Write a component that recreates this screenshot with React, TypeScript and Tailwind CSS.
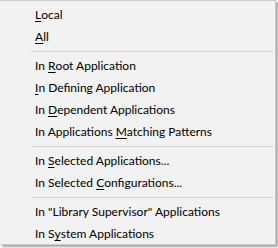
import React from "react";

type Item = { pre: string; key?: string; post: string } | "sep";

const items: Item[] = [
  { pre: "", key: "L", post: "ocal" },
  { pre: "", key: "A", post: "ll" },
  "sep",
  { pre: "In ", key: "R", post: "oot Application" },
  { pre: "", key: "I", post: "n Defining Application" },
  { pre: "In ", key: "D", post: "ependent Applications" },
  { pre: "In Applications ", key: "M", post: "atching Patterns" },
  "sep",
  { pre: "In ", key: "S", post: "elected Applications..." },
  { pre: "In Selected ", key: "C", post: "onfigurations..." },
  "sep",
  { pre: "In \"Library Supervisor\" Applications", post: "" },
  { pre: "In S", key: "y", post: "stem Applications" },
];

export default function App() {
  return (
    <div className="w-[278px] h-[248px] bg-white overflow-hidden">
      <div
        className="w-[276px] h-[245px] bg-[#f2f2f2] border-t border-r border-b border-[#cccccc] shadow-[2px_2px_2px_rgba(0,0,0,0.35)] pt-[3px] text-[12px] text-black"
        style={{ fontFamily: 'Lato, "Liberation Sans", sans-serif' }}
      >
        {items.map((it, i) =>
          it === "sep" ? (
            <div key={i} className="h-[7px] flex items-center pl-[31px] pr-[2px]">
              <div className="h-px w-full bg-[#d7d7d7]" />
            </div>
          ) : (
            <div key={i} className="h-[22px] flex items-center pl-[35px] whitespace-pre leading-none">
              {it.pre}
              {it.key && <span className="underline decoration-1 underline-offset-[2px]">{it.key}</span>}
              {it.post}
            </div>
          )
        )}
      </div>
    </div>
  );
}
